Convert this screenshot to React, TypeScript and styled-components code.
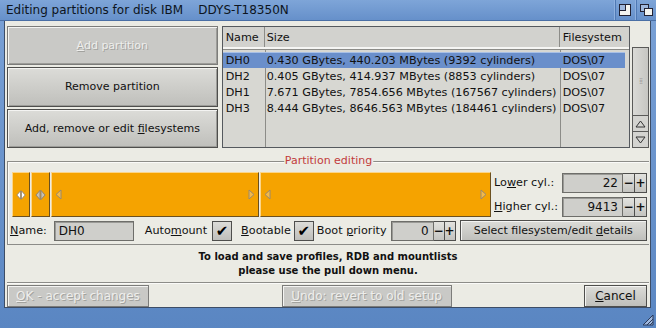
import React from 'react';
import styled, {createGlobalStyle} from "styled-components";

const GlobalStyle = createGlobalStyle`
  html, body {
    margin: 0;
    padding: 0;
    background: #5f8bc5;
  }
  body {
    font-family: "DejaVu Sans", Verdana, sans-serif;
    font-size: 11px;
    color: #111;
  }
`

type Row = { name: string, size: string, fs: string }

const partitions: Row[] = [
    {name: 'DH0', size: '0.430 GBytes, 440.203 MBytes (9392 cylinders)', fs: 'DOS\\07'},
    {name: 'DH2', size: '0.405 GBytes, 414.937 MBytes (8853 cylinders)', fs: 'DOS\\07'},
    {name: 'DH1', size: '7.671 GBytes, 7854.656 MBytes (167567 cylinders)', fs: 'DOS\\07'},
    {name: 'DH3', size: '8.444 GBytes, 8646.563 MBytes (184461 cylinders)', fs: 'DOS\\07'},
]

const Marker = ({kind}: { kind: 'left' | 'right' | 'both' | 'bothWhite' }) => {
    if (kind === 'left') {
        return <svg width="7" height="11" viewBox="0 0 7 11"><path d="M6 1 L1 5.5 L6 10 Z" fill="#f2b94a" stroke="#9a8a70" strokeWidth="1"/></svg>
    }
    if (kind === 'right') {
        return <svg width="7" height="11" viewBox="0 0 7 11"><path d="M1 1 L6 5.5 L1 10 Z" fill="#f2b94a" stroke="#9a8a70" strokeWidth="1"/></svg>
    }
    const fill = kind === 'bothWhite' ? '#ffffff' : '#c8c0b0'
    return (
        <svg width="12" height="12" viewBox="0 0 12 12">
            <path d="M5.5 1 L1 6 L5.5 11 Z" fill={fill} stroke="#8a8070" strokeWidth="1"/>
            <path d="M6.5 1 L11 6 L6.5 11 Z" fill={fill} stroke="#8a8070" strokeWidth="1"/>
        </svg>
    )
}

const Stepper = ({w}: { w: number }) => (
    <StepBox>
        <StepBtn w={w}>−</StepBtn>
        <StepBtn w={w}>+</StepBtn>
    </StepBox>
)

export default function App() {
    return (
        <Frame>
            <GlobalStyle/>
            <TitleBar>
                <Title>Editing partitions for disk IBM&nbsp;&nbsp;&nbsp;&nbsp;DDYS-T18350N</Title>
                <Gadget>
                    <svg width="12" height="12" viewBox="0 0 12 12">
                        <rect x="0.5" y="0.5" width="11" height="11" fill="#f4f4f0" stroke="#223" />
                        <rect x="0.5" y="0.5" width="6" height="6" fill="#9fb8de" stroke="#223" />
                    </svg>
                </Gadget>
                <Gadget>
                    <svg width="13" height="12" viewBox="0 0 13 12">
                        <rect x="0.5" y="0.5" width="8" height="7" fill="#9fb8de" stroke="#223" />
                        <rect x="4.5" y="4.5" width="8" height="7" fill="#f4f4f0" stroke="#223" />
                    </svg>
                </Gadget>
            </TitleBar>
            <Content>
                <TopSection>
                    <ButtonColumn>
                        <BigButton disabled><U>A</U>dd partition</BigButton>
                        <BigButton>Remove partition</BigButton>
                        <BigButton>Add, remove or edit <U>f</U>ilesystems</BigButton>
                    </ButtonColumn>
                    <ListBox>
                        <ListHead>
                            <NameCell>Name</NameCell>
                            <SizeCell>Size</SizeCell>
                            <FsCell>Filesystem</FsCell>
                        </ListHead>
                        <ListBody>
                            <ColLine style={{left: 42}}/>
                            <ColLine style={{left: 337}}/>
                            {partitions.map((p, i) => (
                                <ListRow key={p.name} selected={i === 0}>
                                    <NameCell>{p.name}</NameCell>
                                    <SizeCell>{p.size}</SizeCell>
                                    <FsCell>{p.fs}</FsCell>
                                </ListRow>
                            ))}
                        </ListBody>
                    </ListBox>
                    <ScrollBar>
                        <Knob><Grip>⁞⁞</Grip></Knob>
                        <Arrow>
                            <svg width="11" height="8" viewBox="0 0 11 8"><path d="M5.5 1 L10 7 L1 7 Z" fill="none" stroke="#333" strokeWidth="1"/></svg>
                        </Arrow>
                        <Arrow>
                            <svg width="11" height="8" viewBox="0 0 11 8"><path d="M1 1 L10 1 L5.5 7 Z" fill="none" stroke="#333" strokeWidth="1"/></svg>
                        </Arrow>
                    </ScrollBar>
                </TopSection>

                <Group>
                    <GroupLabel>Partition editing</GroupLabel>
                    <EditRow>
                        <Bar>
                            <Segment width={18} center><Marker kind="bothWhite"/></Segment>
                            <Segment width={19} center><Marker kind="both"/></Segment>
                            <Segment width={208}><Marker kind="left"/><Marker kind="right"/></Segment>
                            <Segment grow><Marker kind="left"/><Marker kind="right"/></Segment>
                        </Bar>
                        <CylGrid>
                            <Label>Lo<U>w</U>er cyl.:</Label>
                            <NumField width={61}>22</NumField>
                            <Stepper w={12}/>
                            <Label><U>H</U>igher cyl.:</Label>
                            <NumField width={61}>9413</NumField>
                            <Stepper w={12}/>
                        </CylGrid>
                    </EditRow>
                    <OptionsRow>
                        <Label gap={-2}><U>N</U>ame:</Label>
                        <TextField>DH0</TextField>
                        <Label gap={11}>Auto<U>m</U>ount</Label>
                        <Check>✔</Check>
                        <Label gap={9}><U>B</U>ootable</Label>
                        <Check gap={3}>✔</Check>
                        <Label gap={3}>Boot <U>p</U>riority</Label>
                        <Spin>
                            <NumField width={43}>0</NumField>
                            <Stepper w={11}/>
                        </Spin>
                        <WideButton><span>Select filesystem/edit <U>d</U>etails</span></WideButton>
                    </OptionsRow>
                </Group>

                <Info>
                    To load and save profiles, RDB and mountlists<br/>
                    please use the pull down menu.
                </Info>

                <BottomRow>
                    <SmallButton disabled width={142}><span><U>O</U>K - accept changes</span></SmallButton>
                    <SmallButton disabled width={170}><span><U>U</U>ndo: revert to old setup</span></SmallButton>
                    <SmallButton width={63}><span><U>C</U>ancel</span></SmallButton>
                </BottomRow>
            </Content>
            <StatusBar>
                <svg width="12" height="12" viewBox="0 0 12 12">
                    <path d="M11 1 L1 11 L11 11 Z" fill="#9fb8de" stroke="#2a3a5a" strokeWidth="1"/>
                    <path d="M11 5 L5 11 M11 8 L8 11" stroke="#2a3a5a" strokeWidth="1"/>
                </svg>
            </StatusBar>
        </Frame>
    );
}

const Frame = styled.div`
  width: 656px;
  height: 328px;
  display: flex;
  flex-direction: column;
  background: linear-gradient(to bottom, #7aa1d6, #5a86c2);
  overflow: hidden;
`

const TitleBar = styled.div`
  height: 20px;
  display: flex;
  align-items: center;
  padding-left: 6px;
  background: linear-gradient(to bottom, #7ea5d8, #6690ca);
  border-bottom: 1px solid #4a6fa5;
`

const Title = styled.div`
  flex: 1;
  font-size: 12px;
  color: #0d1420;
  white-space: nowrap;
`

const Gadget = styled.div`
  width: 20px;
  height: 20px;
  display: flex;
  align-items: center;
  justify-content: center;
  border-left: 1px solid #8eb0df;
  box-shadow: inset 1px 0 0 #4f79b4;
`

const Content = styled.div`
  margin: 0 5px 0 4px;
  height: 287px;
  box-sizing: border-box;
  background: #ebebe4;
  border: 1px solid #3d4d66;
  border-top: none;
  padding: 5px 1px 0 2px;
  display: flex;
  flex-direction: column;
`

const TopSection = styled.div`
  display: flex;
  height: 124px;
`

const ButtonColumn = styled.div`
  width: 212px;
  margin-right: 4px;
  display: flex;
  flex-direction: column;
  gap: 2px;
`

const BigButton = styled.button`
  flex: 1;
  font-family: "DejaVu Sans", Verdana, sans-serif;
  font-size: 11px;
  color: #111;
  border: 1px solid #4e4e4c;
  box-shadow: inset 1px 1px 0 #f4f4f2, inset -1px -1px 0 #9c9c98;
  background: linear-gradient(to bottom, #dcdcd8, #bfbfbb);
  padding: 0;

  &:disabled {
    background: #c9c9c6;
    color: #eeeeec;
    text-shadow: 1px 1px 0 #a2a29e;
    border-color: #7c7c7a;
  }
`

const U = styled.span`
  text-decoration: underline;
`

const ListBox = styled.div`
  width: 409px;
  display: flex;
  flex-direction: column;
  border: 1px solid #55595e;
  background: #d7d7d2;
  font-size: 11.2px;
`

const ListHead = styled.div`
  display: flex;
  height: 20px;
  align-items: center;
  background: #d2d2ce;
  border-bottom: 2px solid #f6f6f4;
  box-shadow: 0 1px 0 #8c8c88;
`

const NameCell = styled.div`
  width: 42px;
  padding-left: 3px;
  box-sizing: border-box;
  height: 100%;
  display: flex;
  align-items: center;
  border-right: 1px solid #8c8c88;
`

const SizeCell = styled.div`
  width: 295px;
  padding-left: 2px;
  box-sizing: border-box;
  height: 100%;
  display: flex;
  align-items: center;
  white-space: nowrap;
  border-right: 1px solid #8c8c88;
`

const FsCell = styled.div`
  flex: 1;
  padding-left: 3px;
  height: 100%;
  display: flex;
  align-items: center;
`

const ListBody = styled.div`
  position: relative;
  flex: 1;
  padding-top: 3px;
`

const ColLine = styled.div`
  position: absolute;
  top: 0;
  bottom: 0;
  width: 1px;
  background: #8c8c88;
`

const ListRow = styled.div<{ selected?: boolean }>`
  position: relative;
  display: flex;
  height: 16px;
  margin-right: 4px;
  background: ${p => p.selected ? '#6a8fcb' : 'transparent'};
  box-shadow: ${p => p.selected ? 'inset 0 1px 0 #a9c0e6' : 'none'};

  & > div {
    border-right: none;
  }
`

const ScrollBar = styled.div`
  width: 17px;
  margin: 21px 0 0 2px;
  display: flex;
  flex-direction: column;
`

const Knob = styled.div`
  flex: 1;
  border: 1px solid #5a5a58;
  background: linear-gradient(to right, #dadad6, #c6c6c2);
  display: flex;
  align-items: center;
  justify-content: center;
`

const Grip = styled.span`
  font-size: 8px;
  color: #a0a09c;
  letter-spacing: -1px;
`

const Arrow = styled.div`
  height: 15px;
  border: 1px solid #5a5a58;
  border-top: none;
  background: #d4d4d0;
  display: flex;
  align-items: center;
  justify-content: center;
`

const Group = styled.div`
  position: relative;
  margin-top: 13px;
  border: 1px solid #8c8c88;
  border-right: none;
  box-shadow: inset 1px 1px 0 #fafaf8;
  padding: 10px 0 3px 4px;
  display: flex;
  flex-direction: column;
  gap: 3px;
`

const GroupLabel = styled.div`
  position: absolute;
  top: -8px;
  left: 50%;
  transform: translateX(-50%);
  padding: 0 1px;
  background: #ebebe4;
  color: #c23b3b;
  font-size: 11px;
`

const EditRow = styled.div`
  display: flex;
  align-items: stretch;
`

const Bar = styled.div`
  width: 479px;
  height: 45px;
  display: flex;
  gap: 1px;
  background: #ebebe4;
`

const Segment = styled.div<{ width?: number, grow?: boolean, center?: boolean }>`
  ${p => p.grow ? 'flex: 1;' : `width: ${p.width}px;`}
  box-sizing: border-box;
  background: #f5a300;
  border-top: 1px solid #fbd58a;
  border-left: 1px solid #fbd58a;
  border-right: 1px solid #6b5020;
  border-bottom: 1px solid #6b5020;
  display: flex;
  align-items: center;
  justify-content: ${p => p.center ? 'center' : 'space-between'};
  padding: 0 3px;
`

const CylGrid = styled.div`
  display: grid;
  grid-template-columns: 68px auto auto;
  grid-auto-rows: 21px;
  row-gap: 3px;
  align-items: center;
  margin-left: 3px;
`

const Label = styled.span<{ gap?: number }>`
  white-space: nowrap;
  font-size: 11.2px;
  margin-left: ${p => p.gap || 0}px;
`

const NumField = styled.div<{ width: number }>`
  width: ${p => p.width}px;
  height: 20px;
  box-sizing: border-box;
  background: #cfcfcb;
  border: 1px solid #6e6e6a;
  box-shadow: inset 1px 1px 0 #9a9a96;
  display: flex;
  align-items: center;
  justify-content: flex-end;
  padding-right: 4px;
  font-size: 12px;
`

const Spin = styled.div`
  display: flex;
  margin-left: 4px;
`

const StepBox = styled.div`
  display: flex;
  height: 20px;
`

const StepBtn = styled.div<{ w: number }>`
  width: ${p => p.w}px;
  height: 20px;
  box-sizing: border-box;
  border: 1px solid #4e4e4c;
  border-left: none;
  background: linear-gradient(to bottom, #e2e2de, #c4c4c0);
  font-weight: bold;
  font-size: 12px;
  display: flex;
  align-items: center;
  justify-content: center;
  line-height: 1;
`

const OptionsRow = styled.div`
  display: flex;
  align-items: center;
  height: 21px;
`

const TextField = styled.div`
  width: 80px;
  height: 20px;
  box-sizing: border-box;
  background: #cfcfcb;
  border: 1px solid #6e6e6a;
  box-shadow: inset 1px 1px 0 #9a9a96;
  display: flex;
  align-items: center;
  padding-left: 4px;
  margin-left: 7px;
  font-size: 12px;
`

const Check = styled.div<{ gap?: number }>`
  width: 20px;
  height: 20px;
  margin-left: ${p => p.gap ?? 5}px;
  box-sizing: border-box;
  border: 1px solid #4e4e4c;
  background: linear-gradient(to bottom, #dcdcd8, #bfbfbb);
  display: flex;
  align-items: center;
  justify-content: center;
  font-size: 15px;
  font-weight: bold;
  color: #000;
`

const WideButton = styled.div`
  margin-left: 4px;
  flex: 1;
  height: 21px;
  box-sizing: border-box;
  border: 1px solid #4e4e4c;
  box-shadow: inset 1px 1px 0 #f4f4f2;
  background: linear-gradient(to bottom, #dcdcd8, #bfbfbb);
  display: flex;
  align-items: center;
  justify-content: center;
  white-space: nowrap;
  font-size: 11px;
  margin-right: 2px;
`

const Info = styled.div`
  text-align: center;
  font-weight: bold;
  font-size: 10px;
  line-height: 14px;
  padding: 5px 0 4px;
  border-bottom: 1px solid #8c8c88;
  box-shadow: 0 1px 0 #fafaf8;
`

const BottomRow = styled.div`
  display: flex;
  justify-content: space-between;
  padding-top: 2px;
  padding-right: 2px;
`

const SmallButton = styled.div<{ disabled?: boolean, width: number }>`
  width: ${p => p.width}px;
  height: 22px;
  box-sizing: border-box;
  border: 1px solid ${p => p.disabled ? '#7c7c7a' : '#4e4e4c'};
  box-shadow: inset 1px 1px 0 #f4f4f2;
  background: ${p => p.disabled ? '#c9c9c6' : 'linear-gradient(to bottom, #dcdcd8, #bfbfbb)'};
  color: ${p => p.disabled ? '#eeeeec' : '#111'};
  text-shadow: ${p => p.disabled ? '1px 1px 0 #a2a29e' : 'none'};
  display: flex;
  align-items: center;
  justify-content: center;
  white-space: nowrap;
  font-size: 12px;
`

const StatusBar = styled.div`
  flex: 1;
  display: flex;
  align-items: flex-end;
  justify-content: flex-end;
  padding: 0 2px 2px 0;
`
